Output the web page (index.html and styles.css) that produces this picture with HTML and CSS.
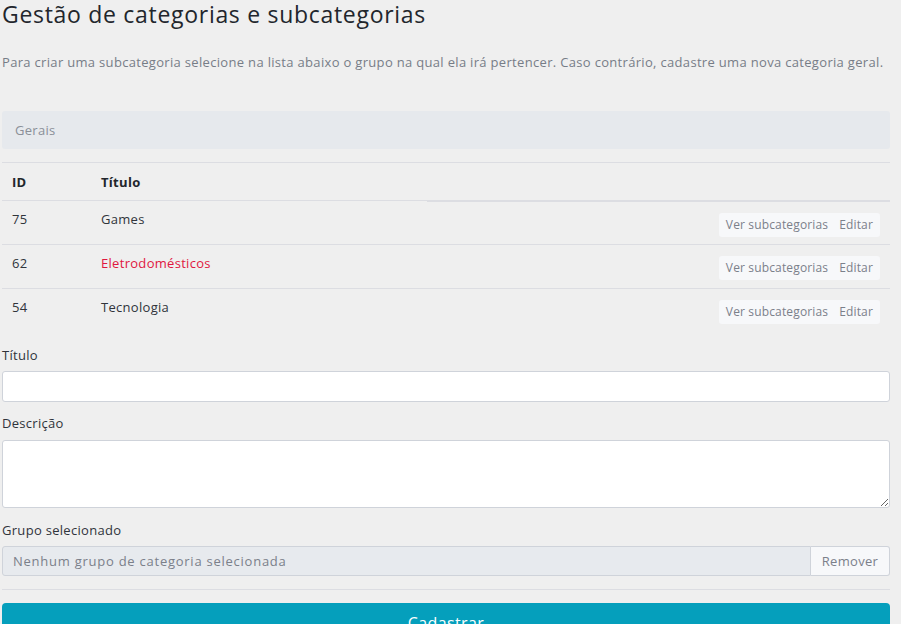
FILE: index.html
```html
<!DOCTYPE html>
<html lang="pt-BR">
<head>
<meta charset="utf-8">
<title>Gestão de categorias e subcategorias</title>
<link rel="stylesheet" href="styles.css">
</head>
<body>
<main class="page">
  <h1 class="title">Gestão de categorias e subcategorias</h1>
  <p class="lead">Para criar uma subcategoria selecione na lista abaixo o grupo na qual ela irá pertencer. Caso contrário, cadastre uma nova categoria geral.</p>

  <div class="group-box">Gerais</div>

  <table class="cat-table">
    <thead>
      <tr>
        <th class="col-id">ID</th>
        <th class="col-title">Título</th>
        <th class="col-actions"></th>
      </tr>
    </thead>
    <tbody>
      <tr>
        <td>75</td>
        <td>Games</td>
        <td class="actions"><span class="btn-group"><span class="btn-link">Ver subcategorias</span><span class="btn-link">Editar</span></span></td>
      </tr>
      <tr>
        <td>62</td>
        <td class="active-title">Eletrodomésticos</td>
        <td class="actions"><span class="btn-group"><span class="btn-link">Ver subcategorias</span><span class="btn-link">Editar</span></span></td>
      </tr>
      <tr>
        <td>54</td>
        <td>Tecnologia</td>
        <td class="actions"><span class="btn-group"><span class="btn-link">Ver subcategorias</span><span class="btn-link">Editar</span></span></td>
      </tr>
    </tbody>
  </table>

  <form class="form">
    <label class="label" for="titulo">Título</label>
    <input class="input" id="titulo" type="text">

    <label class="label" for="descricao">Descrição</label>
    <textarea class="textarea" id="descricao"></textarea>

    <label class="label" for="grupo">Grupo selecionado</label>
    <div class="input-group">
      <input class="input input-disabled" id="grupo" type="text" value="Nenhum grupo de categoria selecionada" disabled>
      <span class="addon">Remover</span>
    </div>

    <hr class="divider">

    <button class="submit" type="button">Cadastrar</button>
  </form>
</main>
</body>
</html>
```
FILE: styles.css
```css
* { box-sizing: border-box; }

html, body {
  margin: 0;
  padding: 0;
  background: #efefef;
}

body {
  font-family: "Open Sans", "DejaVu Sans", sans-serif;
  color: #2b2f36;
  font-size: 13px;
  letter-spacing: 0.3px;
}

.page {
  width: 888px;
  margin-left: 2px;
}

.title {
  margin: 0;
  font-size: 23px;
  line-height: 28px;
  font-weight: 400;
  letter-spacing: 0.7px;
  color: #22262c;
}

.lead {
  margin: 25px 0 0;
  font-size: 13px;
  line-height: 18px;
  color: #777d87;
  letter-spacing: 0.32px;
}

.group-box {
  margin-top: 40px;
  height: 38px;
  line-height: 38px;
  padding-left: 13px;
  background: #e6e9ed;
  border-radius: 3px;
  color: #8a8f98;
  font-size: 13px;
}

.cat-table {
  margin-top: 13px;
  width: 100%;
  border-collapse: collapse;
  font-size: 13px;
}

.cat-table th {
  text-align: left;
  font-weight: 700;
  color: #22262c;
  height: 38px;
  padding: 0 10px;
  border-top: 1px solid #dcdde2;
  border-bottom: 1px solid #dcdde2;
}

.cat-table th.col-id { width: 89px; }
.cat-table th.col-title { width: 336px; }
.cat-table th.col-actions { border-bottom: 2px solid #dcdde2; }

.cat-table td {
  padding: 10px 10px 0;
  height: 44px;
  vertical-align: top;
  color: #30343b;
  border-bottom: 1px solid #dcdde2;
  line-height: 16px;
}

.cat-table tbody tr:last-child td { border-bottom: none; }

.cat-table td.active-title { color: #e0173f; }

.cat-table td.actions {
  text-align: right;
  padding-top: 10px;
}

.btn-group {
  display: inline-flex;
  background: #f7f8fa;
  border-radius: 3px;
  height: 24px;
  align-items: center;
  padding: 0 7px;
  gap: 11px;
  margin-top: 1px;
}

.btn-link {
  font-size: 12px;
  color: #7b808a;
  letter-spacing: 0.15px;
}

.form {
  display: flex;
  flex-direction: column;
  padding-top: 13px;
}

.label {
  font-size: 13px;
  line-height: 18px;
  color: #30343b;
  margin-bottom: 7px;
}

.input {
  height: 31px;
  width: 100%;
  border: 1px solid #cfd3da;
  border-radius: 3px;
  background: #fff;
  font: inherit;
  font-size: 13px;
  padding: 0 10px;
  margin-bottom: 12px;
}

.textarea {
  height: 68px;
  width: 100%;
  border: 1px solid #cfd3da;
  border-radius: 3px;
  background: #fff;
  font: inherit;
  margin: 1px 0 13px;
  display: block;
  resize: vertical;
}

.input-group {
  display: flex;
  height: 30px;
}

.input-group .input {
  flex: 1;
  height: 30px;
  margin: 0;
  border-radius: 3px 0 0 3px;
}

.input-disabled {
  background: #e7eaee;
  color: #7b808a;
  letter-spacing: 0.75px;
}

.addon {
  width: 79px;
  border: 1px solid #cfd3da;
  border-left: none;
  border-radius: 0 3px 3px 0;
  background: #f7f8fa;
  color: #7b808a;
  font-size: 13px;
  display: flex;
  align-items: center;
  justify-content: center;
}

.divider {
  width: 100%;
  margin: 13px 0 13px;
  border: none;
  border-top: 1px solid #dcdde2;
}

.submit {
  width: 100%;
  height: 40px;
  border: none;
  border-radius: 4px;
  background: #059fbc;
  color: #fff;
  font: inherit;
  font-size: 16px;
  letter-spacing: 0.4px;
  padding: 0;
  line-height: 40px;
}
```
